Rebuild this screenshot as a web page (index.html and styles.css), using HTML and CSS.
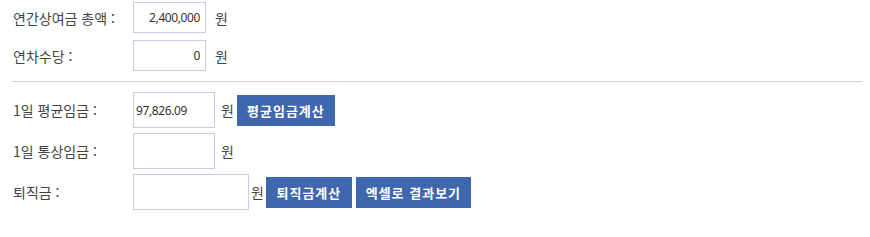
FILE: index.html
```html
<!DOCTYPE html>
<html lang="ko">
<head>
    <meta charset="UTF-8">
    <title>퇴직금 계산</title>
    <link rel="stylesheet" href="styles.css">
</head>
<body>
    <div class="calc">
        <div class="row row-top first">
            <span class="label">연간상여금 총액 :</span>
            <input class="field small num" type="text" value="2,400,000">
            <span class="unit wide">원</span>
        </div>
        <div class="row row-top">
            <span class="label">연차수당 :</span>
            <input class="field small num" type="text" value="0">
            <span class="unit wide">원</span>
        </div>

        <hr class="divider">

        <div class="row row-bottom">
            <span class="label">1일 평균임금 :</span>
            <input class="field mid" type="text" value="97,826.09">
            <span class="unit">원</span>
            <button class="btn btn-avg">평균임금계산</button>
        </div>
        <div class="row row-bottom">
            <span class="label">1일 통상임금 :</span>
            <input class="field mid" type="text" value="">
            <span class="unit">원</span>
        </div>
        <div class="row row-bottom">
            <span class="label">퇴직금 :</span>
            <input class="field large" type="text" value="">
            <span class="unit tight">원</span>
            <button class="btn btn-calc">퇴직금계산</button>
            <button class="btn btn-excel">엑셀로 결과보기</button>
        </div>
    </div>
</body>
</html>
```

FILE: styles.css
```css
body {
    margin: 0;
    background-color: #fff;
    font-family: "Noto Sans CJK KR", "Noto Sans", sans-serif;
    font-size: 14px;
    color: #444;
}

.calc {
    padding: 2px 8px 0 12px;
}

.row {
    display: flex;
    align-items: center;
}

.row-top {
    height: 31px;
    margin-top: 7px;
}

.row-top.first {
    margin-top: 0;
}

.row-bottom {
    height: 36px;
    margin-bottom: 5px;
}

.label {
    width: 120px;
    flex-shrink: 0;
    padding-left: 1px;
}

.field {
    box-sizing: border-box;
    border: 1px solid #cbcbe2;
    background: #fff;
    font-family: "Noto Sans", sans-serif;
    font-size: 12px;
    color: #333;
    padding: 0 2px;
    letter-spacing: -0.4px;
    outline: none;
}

.field.small {
    width: 73px;
    height: 31px;
}

.field.mid {
    width: 82px;
    height: 36px;
}

.field.large {
    width: 116px;
    height: 36px;
}

.num {
    text-align: right;
    padding-right: 5px;
}

.unit {
    margin-left: 6px;
    margin-right: 3px;
}

.unit.wide {
    margin-left: 9px;
}

.unit.tight {
    margin-left: 2px;
    margin-right: 2px;
}

.divider {
    border: none;
    border-top: 1px solid #d4d4d4;
    margin: 10px 0 10px 0;
}

.btn {
    height: 31px;
    padding: 0;
    margin-right: 4px;
    border: none;
    background-color: #3f67ad;
    color: #fff;
    font-family: "Noto Sans CJK KR", sans-serif;
    font-size: 13px;
    font-weight: bold;
    letter-spacing: 1px;
    cursor: pointer;
}

.btn-avg {
    width: 98px;
}

.btn-calc {
    width: 86px;
}

.btn-excel {
    width: 115px;
}
```
